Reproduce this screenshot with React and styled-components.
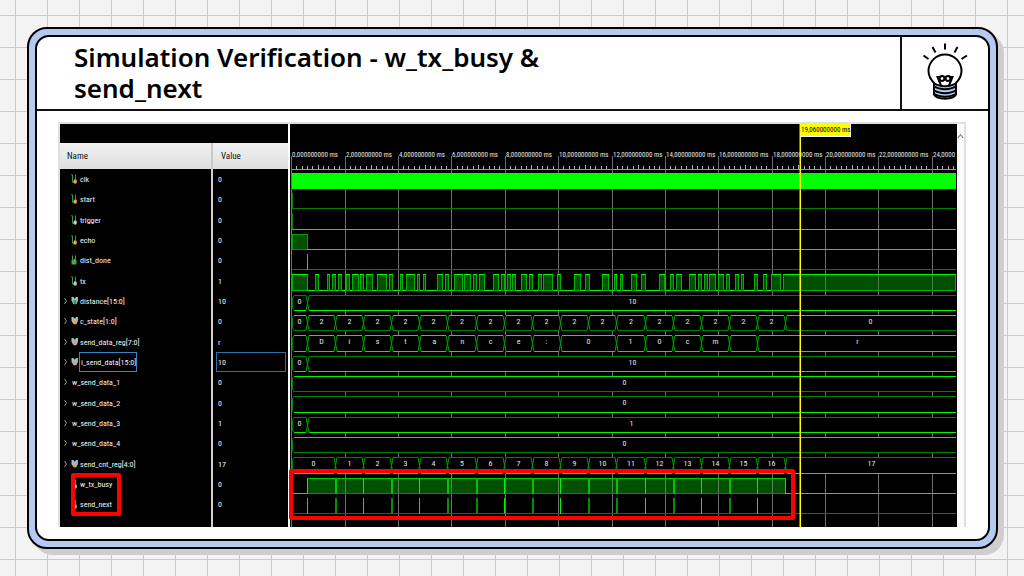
import React from 'react';
import styled, { createGlobalStyle } from 'styled-components';

const GlobalStyle = createGlobalStyle`
  *, *::before, *::after { box-sizing: border-box; }
  body {
    margin: 0;
    font-family: "Noto Sans", "Liberation Sans", sans-serif;
    background-color: #f3f3f3;
    background-image:
      linear-gradient(to right, #b4cdf6 1px, transparent 1px),
      linear-gradient(to bottom, #b4cdf6 1px, transparent 1px);
    background-size: 32px 32px;
    background-position: 15px 15px;
  }
`;

const Page = styled.main`
  min-height: 100vh;
  padding: 27px 26px 27px 27px;
  display: flex;
`;

const Frame = styled.div`
  flex: 1;
  min-width: 0;
  display: flex;
  padding: 6px;
  background: #b5caf2;
  border: 2px solid #000;
  border-radius: 20px;
  box-shadow: 6px 6px 0 #cfcdd0;
`;

const Card = styled.section`
  flex: 1;
  min-width: 0;
  display: flex;
  flex-direction: column;
  background: #fff;
  border: 2px solid #000;
  border-radius: 14px;
  overflow: hidden;
`;

const Header = styled.header`
  display: flex;
  min-height: 74px;
  border-bottom: 2px solid #111;
`;

const Title = styled.h1`
  flex: 1;
  margin: 0;
  padding: 5px 0 0 37px;
  font-size: 26px;
  line-height: 31px;
  font-weight: 600;
  color: #000;
`;

const TitleText = styled.span`
  display: block;
  max-width: 490px;
`;

const IconCell = styled.div`
  width: 88px;
  border-left: 2px solid #111;
  display: flex;
  justify-content: center;
  padding-top: 6px;
`;

const Capture = styled.div`
  position: relative;
  display: flex;
  margin: 11px 22px 12px 21px;
  border: solid #e0e0e0;
  border-width: 2px 2px 0 2px;
`;

const Signals = styled.table`
  width: 230px;
  flex: none;
  align-self: stretch;
  border-collapse: separate;
  border-spacing: 0;
  table-layout: fixed;
  background: #000;
  border-right: 2px solid #fff;
  color: #f4f4f4;
  font: 8px/12px "Roboto Condensed", Roboto, "Liberation Sans", sans-serif;
`;

const NameCol = styled.col`width: 153px;`;

const Band = styled.caption`
  height: 19px;
  background: #000;
  border-right: 2px solid #fff;
`;

const HeadCell = styled.th`
  height: 26px;
  padding: 0 0 0 ${(p) => (p.$value ? 8 : 7)}px;
  text-align: left;
  font-weight: 400;
  font-size: 9px;
  color: #111;
  background: linear-gradient(#f1f1f1, #dfdfe1);
  border-right: ${(p) => (p.$value ? 0 : 2)}px solid #c8c8c8;
`;

const SignalRow = styled.tr`
  height: 20px;
  &:nth-child(3n) { height: 21px; }
`;

const NameCell = styled.td`
  padding: 0;
  border-right: 2px solid #d0d0d0;
`;

const ValueCell = styled.td`
  padding: 0 2px 0 3px;
`;

const NameLine = styled.div`
  display: flex;
  align-items: center;
  padding-left: 4px;
  white-space: nowrap;
`;

const Slot = styled.span`
  flex: none;
  display: flex;
  width: ${(p) => p.$w}px;
`;

const Label = styled.span`
  padding: 4px 0 2px 1px;
  border: 1px solid ${(p) => (p.$selected ? '#3585c4' : 'transparent')};
  border-left-width: ${(p) => (p.$selected ? 1 : 0)}px;
`;

const Value = styled.div`
  padding: 4px 1px 2px;
  border: 1px solid ${(p) => (p.$selected ? '#2b71a8' : 'transparent')};
`;

const Filler = styled.td`
  padding: 0;
  border-right: ${(p) => (p.$name ? 2 : 0)}px solid #d0d0d0;
`;

const WavePane = styled.div`
  flex: 1;
  min-width: 0;
  background: #000;
`;

const WaveSvg = styled.svg`
  display: block;
  width: 100%;
  height: auto;
`;

const Scroll = styled.div`
  width: 7px;
  flex: none;
  background: #fbfbfb;
`;

const ScrollButton = styled.button`
  display: block;
  width: 7px;
  height: 12px;
  padding: 3px 0 0;
  border: 0;
  background: none;
`;

const Highlight = styled.div`
  position: absolute;
  border: 4px solid #fe0000;
  border-radius: 2px;
  pointer-events: none;
`;

const NameHighlight = styled(Highlight)`
  left: 11px;
  top: 349px;
  width: 50px;
  height: 43px;
`;

const WaveHighlight = styled(Highlight)`
  left: 229px;
  right: 169px;
  top: 345px;
  height: 51px;
`;

const SIGNALS = [
  { name: 'clk', value: '0', icon: 'bit', dot: '#f3a64b' },
  { name: 'start', value: '0', icon: 'bit', dot: '#f3a64b' },
  { name: 'trigger', value: '0', icon: 'bit', dot: '#c8c8c8' },
  { name: 'echo', value: '0', icon: 'bit', dot: '#f3a64b' },
  { name: 'dist_done', value: '0', icon: 'wire' },
  { name: 'tx', value: '1', icon: 'bit', dot: '#c8c8c8' },
  { name: 'distance[15:0]', value: '10', icon: 'bus', dot: '#3f9b4c' },
  { name: 'c_state[1:0]', value: '0', icon: 'bus', dot: '#f0a040' },
  { name: 'send_data_reg[7:0]', value: 'r', icon: 'bus', dot: '#f0a040' },
  { name: 'i_send_data[15:0]', value: '10', icon: 'bus', dot: '#f0a040', selected: true },
  { name: 'w_send_data_1', value: '0', icon: 'none' },
  { name: 'w_send_data_2', value: '0', icon: 'none' },
  { name: 'w_send_data_3', value: '1', icon: 'none' },
  { name: 'w_send_data_4', value: '0', icon: 'none' },
  { name: 'send_cnt_reg[4:0]', value: '17', icon: 'bus', dot: '#f0a040' },
  { name: 'w_tx_busy', value: '0', icon: 'bit', dot: '#c8c8c8' },
  { name: 'send_next', value: '0', icon: 'bit', dot: '#f3a64b' },
];

function SignalIcon({ kind, dot }) {
  if (kind === 'bus') {
    return (
      <svg width="8" height="10" viewBox="0 0 8 10">
        <path d="M0.5 1h2l0.800 1.500h0.800l0.800-1.500h2v4L5.500 8h-3L0.500 5z" fill="#9dbfd0" />
        <path d="M2.500 4h2.800v3L4 9 2.500 7z" fill={dot} />
      </svg>
    );
  }
  if (kind === 'wire') {
    return (
      <svg width="8" height="10" viewBox="0 0 8 10">
        <path d="M1.500 0.500v5M4.500 0.500v5" stroke="#3c9a48" />
        <path d="M0.500 5h2l0.500-1h1v1H5.500v4.500H0.500z" fill="#4aa552" />
      </svg>
    );
  }
  return (
    <svg width="8" height="10" viewBox="0 0 8 10">
      <path d="M0 0.800h1.500v7.500h1.500M4.500 0.500v5" fill="none" stroke="#2f9a45" />
      <ellipse cx="4.200" cy="7.500" rx="1.700" ry="2.200" fill={dot} />
    </svg>
  );
}

function Chevron() {
  return (
    <svg width="4" height="8" viewBox="0 0 4 8">
      <path d="M0.500 1l2 3-2 3" fill="none" stroke="#a0a0a0" strokeWidth="0.900" />
    </svg>
  );
}

function SignalTable() {
  return (
    <Signals>
      <Band aria-label="Signals" />
      <colgroup><NameCol /><col /></colgroup>
      <thead>
        <tr>
          <HeadCell scope="col">Name</HeadCell>
          <HeadCell scope="col" $value>Value</HeadCell>
        </tr>
      </thead>
      <tbody>
        {SIGNALS.map((s) => {
          const vector = s.icon === 'bus' || s.icon === 'none';
          return (
            <SignalRow key={s.name}>
              <NameCell>
                <NameLine>
                  <Slot $w={7}>{vector && <Chevron />}</Slot>
                  {s.icon !== 'none' && (
                    <Slot $w={8}><SignalIcon kind={s.icon} dot={s.dot} /></Slot>
                  )}
                  <Label $selected={s.selected}>{s.name}</Label>
                </NameLine>
              </NameCell>
              <ValueCell><Value $selected={s.selected}>{s.value}</Value></ValueCell>
            </SignalRow>
          );
        })}
        <tr><Filler $name /><Filler /></tr>
      </tbody>
    </Signals>
  );
}

const BRIGHT = '#00f400';
const DARK = '#008200';
const FILL = '#005000';
const X0 = 292;
const X1 = 956;

const GRID = [345, 398, 451, 505, 558, 612, 665, 718, 772, 825, 878, 932];
const EDGES = [307, 335, 363, 391, 419, 447, 476, 504, 532, 560, 588, 616, 645, 673, 701, 729, 757, 785];
const WIDE_EDGES = new Set([335, 391, 447, 476, 532, 588, 616, 673, 729]);
const TX_HIGH = [
  [292, 307], [315, 318], [327, 329], [332, 335], [338, 341], [346, 349], [352, 358], [360, 363],
  [366, 372], [377, 386], [389, 392], [400, 402], [406, 414], [417, 419], [423, 425], [437, 442],
  [445, 448], [454, 462], [464, 470], [473, 476], [479, 484], [493, 498], [501, 504], [507, 510],
  [512, 515], [521, 526], [529, 532], [538, 541], [543, 552], [557, 560], [574, 580], [585, 589],
  [602, 608], [614, 616], [620, 622], [631, 636], [641, 645], [659, 664], [670, 673], [676, 681],
  [689, 695], [698, 701], [704, 707], [709, 715], [718, 723], [726, 729], [735, 738], [741, 743],
  [754, 757], [763, 766], [771, 780], [783, 955],
];

const BUSES = [
  { top: 295, bottom: 310, tc: DARK, bc: BRIGHT, edges: [307], labels: [[299, '0'], [632, '10']] },
  {
    top: 315, bottom: 330, tc: BRIGHT, bc: DARK, edges: EDGES,
    labels: [[299, '0'], ...EDGES.slice(0, -1).map((x, i) => [(x + EDGES[i + 1]) / 2, '2']), [870, '0']],
  },
  {
    top: 335, bottom: 351, tc: BRIGHT, bc: BRIGHT, edges: EDGES.filter((x) => x !== 588 && x !== 785),
    labels: [
      [321, 'D'], [349, 'i'], [377, 's'], [405, 't'], [434, 'a'], [462, 'n'], [490, 'c'], [518, 'e'],
      [546, ':'], [588, '0'], [630, '1'], [659, '0'], [687, 'c'], [715, 'm'], [857, 'r'],
    ],
  },
  { top: 356, bottom: 371, tc: DARK, bc: BRIGHT, edges: [307], labels: [[299, '0'], [632, '10']] },
  { top: 376, bottom: 391, tc: BRIGHT, bc: DARK, edges: [], labels: [[624, '0']] },
  { top: 396, bottom: 412, tc: DARK, bc: BRIGHT, edges: [], labels: [[624, '0']] },
  { top: 417, bottom: 432, tc: DARK, bc: BRIGHT, edges: [307], labels: [[299, '0'], [631, '1']] },
  { top: 437, bottom: 452, tc: BRIGHT, bc: DARK, edges: [], labels: [[624, '0']] },
  {
    top: 457, bottom: 473, tc: DARK, bc: BRIGHT, edges: EDGES.slice(1),
    labels: [[313, '0'], ...EDGES.slice(1, -1).map((x, i) => [(x + EDGES[i + 2]) / 2, String(i + 1)]), [871, '17']],
  },
];

const HLine = ({ y, x = X0, to = X1, c }) => <rect x={x} y={y} width={to - x} height="1" fill={c} />;
const VLine = ({ x, y, h, c, w = 1 }) => <rect x={x} y={y} width={w} height={h} fill={c} />;

function Ruler() {
  const ticks = [];
  for (let k = 0; k <= 124; k += 1) {
    if (k % 10 !== 0) ticks.push(k);
  }
  return (
    <g>
      {ticks.map((k) => (
        <VLine key={k} x={Math.round(291 + k * 5.34)} y={k % 5 === 0 ? 165 : 166} h={k % 5 === 0 ? 4 : 3} c="#b0b0b0" />
      ))}
      <HLine y={169} x={291} c="#9a9a9a" />
      <VLine x={291} y={156} h={371} c="#6e6e6e" />
      {GRID.map((x) => <VLine key={x} x={x} y={156} h={371} c="#6e6e6e" />)}
      {[291, ...GRID].map((x, i) => (
        <text key={x} x={x + 1} y={157} fontSize="7" fill="#e6e6e6">
          {i === GRID.length ? `${i * 2},0000` : `${i * 2},000000000 ms`}
        </text>
      ))}
    </g>
  );
}

function Bus({ top, bottom, tc, bc, edges, labels }) {
  const mid = (top + bottom + 1) / 2;
  return (
    <g>
      <rect x={X0} y={top} width={X1 - X0} height={bottom - top + 1} fill="#000" />
      <HLine y={top} x={X0 + 2} c={tc} />
      <HLine y={bottom} x={X0 + 2} c={bc} />
      <path d={`M${X0 + 2} ${top + 0.5}L${X0 + 0.5} ${top + 3}V${bottom - 2}L${X0 + 2} ${bottom + 0.5}`} stroke={DARK} fill="none" />
      {edges.map((x) => (
        <g key={x}>
          <rect x={x - 1} y={top} width="3" height={bottom - top + 1} fill="#000" />
          <path
            d={`M${x - 1} ${top + 0.5}L${x + 0.5} ${mid}L${x - 1} ${bottom + 0.5}M${x + 2} ${top + 0.5}L${x + 0.5} ${mid}L${x + 2} ${bottom + 0.5}`}
            stroke="#00a000"
            fill="none"
          />
        </g>
      ))}
      {labels.map(([x, t]) => (
        <text key={x} x={x + 0.5} y={top + 9} fontSize="8" textAnchor="middle" fill="#e6e6e6">{t}</text>
      ))}
    </g>
  );
}

function Waves() {
  return (
    <WaveSvg viewBox="290 124 667 403" fontFamily='"Roboto Condensed", Roboto, "Liberation Sans", sans-serif' role="img" aria-label="Waveforms">
      <rect x="290" y="124" width="667" height="403" fill="#000" />
      <Ruler />

      <rect x={X0} y="173" width={X1 - X0} height="16" fill="#00ff00" />
      <HLine y={208} c={DARK} />
      <VLine x={292} y={193} h={16} c={DARK} />
      <HLine y={229} c={BRIGHT} />
      <VLine x={292} y={213} h={16} c={DARK} />

      <rect x="292.500" y="234.500" width="15" height="15" fill={FILL} stroke="#009a00" />
      <HLine y={249} x={307} c={BRIGHT} />
      <HLine y={269} c={DARK} />
      <VLine x={307} y={254} h={16} c={BRIGHT} />

      <HLine y={290} c={BRIGHT} />
      {TX_HIGH.map(([a, b]) => (
        <g key={a}>
          <rect x={a + 0.5} y="274.500" width={b - a} height="16" fill={FILL} stroke="#00b000" />
          <HLine y={274} x={a} to={b + 1} c={BRIGHT} />
        </g>
      ))}
      {GRID.slice(-3).map((x) => <VLine key={x} x={x} y={275} h={15} c="#4f7a4f" />)}

      {BUSES.map((b) => <Bus key={b.top} {...b} />)}

      <rect x="307" y="478" width="479" height="16" fill={FILL} />
      <HLine y={478} x={307} to={786} c="#00c800" />
      <HLine y={493} x={307} to={786} c="#009000" />
      <HLine y={493} to={307} c={BRIGHT} />
      <HLine y={493} x={786} c={BRIGHT} />
      {GRID.slice(0, 9).map((x) => <VLine key={x} x={x} y={479} h={14} c="#5f7f5f" />)}
      <HLine y={513} c={DARK} />
      {EDGES.map((x) => {
        const wide = WIDE_EDGES.has(x);
        return <VLine key={x} x={x} y={478} h={16} w={wide ? 2 : 1} c={wide ? '#00c400' : BRIGHT} />;
      })}
      {EDGES.slice(0, -1).map((x) => {
        const wide = WIDE_EDGES.has(x);
        return <VLine key={x} x={x} y={498} h={16} w={wide ? 2 : 1} c={wide ? '#009000' : BRIGHT} />;
      })}

      <rect x="799.500" y="124" width="1.500" height="403" fill="#ffff00" />
      <rect x="800" y="124" width="51" height="13" fill="#fff" />
      <rect x="800" y="124" width="50" height="12" fill="#ffff00" />
      <text x="801" y="132" fontSize="7" fill="#000">19,060000000 ms</text>
    </WaveSvg>
  );
}

function Bulb() {
  return (
    <svg width="48" height="60" viewBox="0 0 48 60" fill="none" stroke="#000" strokeWidth="2" strokeLinecap="round">
      <path d="M24 0.500v6M11.500 4l3 5.500M36.500 4L33.500 9.500M2.500 12.500l5 3.500M46 12.500l-5.500 3.500" strokeLinecap="butt" />
      <path d="M13 40v11.500c3 5.500 19 5.500 22 0V40z" fill="#b5caf2" strokeLinejoin="round" />
      <path d="M13.500 40.500C9 36 7.500 32 7.500 28a16.500 16.500 0 0 1 33 0c0 4-1.500 8-6 12.500-5 3.500-16 3.500-21 0z" fill="#fff" />
      <path d="M13.500 43.500c5 3.500 16 3.500 21 0M13.500 47.500c5 3.500 16 3.500 21 0M13.500 51c5 3.500 16 3.500 21 0" />
      <path d="M20 42.500L16.500 34h3M28 42.500l3.500-8.500h-3" />
      <circle cx="21" cy="35.500" r="2.400" />
      <circle cx="27" cy="35.500" r="2.400" />
    </svg>
  );
}

export default function App() {
  return (
    <>
      <GlobalStyle />
      <Page>
        <Frame>
          <Card>
            <Header>
              <Title><TitleText>Simulation Verification - w_tx_busy &amp; send_next</TitleText></Title>
              <IconCell><Bulb /></IconCell>
            </Header>
            <Capture>
              <SignalTable />
              <WavePane><Waves /></WavePane>
              <Scroll>
                <ScrollButton type="button" aria-label="Scroll up">
                  <svg width="7" height="6" viewBox="0 0 7 6">
                    <path d="M1 5l2.500-3.500L6 5" fill="none" stroke="#555" />
                  </svg>
                </ScrollButton>
              </Scroll>
              <NameHighlight />
              <WaveHighlight />
            </Capture>
          </Card>
        </Frame>
      </Page>
    </>
  );
}
